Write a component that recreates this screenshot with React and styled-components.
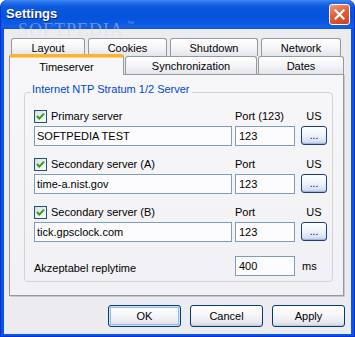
import React from "react";
import styled, { createGlobalStyle } from "styled-components";

const GlobalStyle = createGlobalStyle`
  html, body {
    margin: 0;
    padding: 0;
    background: #ffffff;
  }
  body {
    font-family: "Liberation Sans", Arial, sans-serif;
    font-size: 11px;
    color: #000;
  }
`;

const Window = styled.div`
  position: relative;
  width: 355px;
  height: 337px;
  box-sizing: border-box;
  display: flex;
  flex-direction: column;
  background: #0a55e0;
  border: 1px solid #0831d9;
  border-top: none;
  border-radius: 7px 7px 0 0;
  overflow: hidden;
`;

const TitleBar = styled.div`
  height: 29px;
  flex: none;
  display: flex;
  align-items: center;
  justify-content: space-between;
  padding: 0 4px 0 5px;
  background: linear-gradient(
    180deg,
    #3d8df7 0px,
    #2a73ea 2px,
    #0b58dc 7px,
    #0653dc 18px,
    #0a5be4 24px,
    #1560e6 27px,
    #0c4fd0 29px
  );
`;

const Title = styled.span`
  font-family: "Liberation Sans", Arial, sans-serif;
  font-weight: bold;
  font-size: 13px;
  line-height: 14px;
  margin-top: -2px;
  color: #ffffff;
  text-shadow: 1px 1px 0 #0a1e8a;
`;

const CloseButton = styled.div`
  width: 21px;
  height: 21px;
  box-sizing: border-box;
  border: 1px solid #ffffff;
  border-radius: 3px;
  background: linear-gradient(160deg, #f09a7c 0%, #e2603c 45%, #c8441f 100%);
  display: flex;
  align-items: center;
  justify-content: center;
`;

const Watermark = styled.div`
  position: absolute;
  left: 17px;
  top: 22px;
  height: 16px;
  display: flex;
  align-items: flex-start;
  font-family: "Liberation Serif", "Times New Roman", serif;
  font-size: 18px;
  line-height: 16px;
  letter-spacing: 1px;
  color: rgba(220, 220, 226, 0.45);
  pointer-events: none;
`;

const Trademark = styled.span`
  font-family: "Liberation Sans", Arial, sans-serif;
  font-size: 7px;
  line-height: 7px;
  margin-left: 3px;
  margin-top: -2px;
`;

const Client = styled.div`
  flex: 1;
  margin: 0 3px 3px 3px;
  background: #ecebef;
  padding: 9px 7px 7px 5px;
  display: flex;
  flex-direction: column;
`;

const TabRow = styled.div`
  display: flex;
  align-items: flex-end;
  height: 18px;
  gap: ${(p) => p.$gap}px;
  padding-left: ${(p) => p.$indent}px;
`;

const Tab = styled.div`
  position: relative;
  width: ${(p) => p.$w}px;
  height: ${(p) => (p.$active ? 21 : 18)}px;
  box-sizing: border-box;
  flex: none;
  display: flex;
  align-items: center;
  justify-content: center;
  border: 1px solid #919b9c;
  border-bottom: none;
  border-radius: 3px 3px 0 0;
  background: ${(p) =>
    p.$active
      ? "#f7f7f9"
      : "linear-gradient(180deg, #ffffff 0%, #f5f5f8 50%, #e4e5ec 100%)"};
  ${(p) =>
    p.$active &&
    `
    z-index: 2;
    margin-top: -3px;
    margin-bottom: -1px;
    border-top: 3px solid #f8b33a;
    box-shadow: inset 0 1px 0 #ffd36a;
    padding-top: 1px;
  `}
  font-size: 11px;
  color: #000;
`;

const Panel = styled.div`
  height: 222px;
  box-sizing: border-box;
  border: 1px solid #919b9c;
  box-shadow: 1px 1px 0 #c8c6d0;
  background: linear-gradient(180deg, #f7f7f9 0%, #f1f0f4 100%);
  padding: 8px 11px 0 14px;
`;

const Group = styled.fieldset`
  margin: 0;
  width: 308px;
  box-sizing: border-box;
  border: 1px solid #d3d2d8;
  border-radius: 4px;
  padding: 6px 4px 5px 9px;
`;

const Legend = styled.legend`
  color: #0046d5;
  font-size: 11px;
  line-height: 12px;
  padding: 0 2px 7px 1px;
  margin-left: -3px;
`;

const ServerBlock = styled.div`
  display: grid;
  grid-template-columns: 201px 66px 26px;
  grid-template-rows: 16px 20px;
  row-gap: 2px;
  margin-bottom: ${(p) => p.$after}px;
`;

const CheckLabel = styled.label`
  display: flex;
  align-items: center;
  gap: 4px;
  font-size: 11px;
`;

const Box = styled.span`
  width: 13px;
  height: 13px;
  box-sizing: border-box;
  border: 1px solid #1c5180;
  background: linear-gradient(135deg, #dcdcd7 0%, #ffffff 100%);
  display: flex;
  align-items: center;
  justify-content: center;
`;

const ColLabel = styled.span`
  display: flex;
  align-items: center;
  justify-content: ${(p) => (p.$center ? "center" : "flex-start")};
  font-size: 11px;
`;

const Field = styled.div`
  width: ${(p) => p.$w}px;
  height: 20px;
  box-sizing: border-box;
  border: 1px solid #7f9db9;
  background: #fcfcfe;
  display: flex;
  align-items: center;
  padding-left: ${(p) => p.$pad}px;
  font-size: 11px;
  white-space: nowrap;
`;

const DotsButton = styled.div`
  width: 26px;
  height: 19px;
  box-sizing: border-box;
  border: 1px solid #1c3f7a;
  border-radius: 3px;
  background: linear-gradient(180deg, #ffffff 0%, #f1f4fb 45%, #d7e0f2 85%, #b8c8e8 100%);
  box-shadow: inset 0 -1px 0 #9fb4de;
  display: flex;
  align-items: flex-end;
  justify-content: center;
  padding-bottom: 3px;
  font-size: 10px;
  line-height: 10px;
`;

const ReplyRow = styled.div`
  display: grid;
  grid-template-columns: 201px 67px 26px;
  height: 20px;
  align-items: center;
  margin-top: 14px;
`;

const ReplyLabel = styled.span`
  font-size: 11px;
  padding-top: 3px;
`;

const ButtonRow = styled.div`
  display: flex;
  justify-content: flex-end;
  gap: 9px;
  margin-top: 9px;
  margin-right: -1px;
`;

const DialogButton = styled.div`
  width: 73px;
  height: 22px;
  box-sizing: border-box;
  border: 1px solid #003c74;
  border-radius: 3px;
  background: linear-gradient(180deg, #ffffff 0%, #f7f7fa 40%, #e9eaf0 80%, #d4d6e0 100%);
  box-shadow: ${(p) =>
    p.$default
      ? "inset 0 0 0 1px #cee7ff, inset 0 0 0 2px #98b8ea"
      : "inset 0 -1px 0 #c9cbd6"};
  display: flex;
  align-items: center;
  justify-content: center;
  font-size: 11px;
`;

function Check() {
  return (
    <Box>
      <svg width="9" height="9" viewBox="0 0 9 9">
        <polyline
          points="1,4 3.3,6.6 8,1.6"
          fill="none"
          stroke="#21a121"
          strokeWidth="2"
        />
      </svg>
    </Box>
  );
}

function Server({ label, port, value, after }) {
  return (
    <ServerBlock $after={after}>
      <CheckLabel>
        <Check />
        {label}
      </CheckLabel>
      <ColLabel>{port}</ColLabel>
      <ColLabel $center>US</ColLabel>
      <Field $w={198} $pad={2}>{value}</Field>
      <Field $w={60} $pad={3}>123</Field>
      <DotsButton>...</DotsButton>
    </ServerBlock>
  );
}

export default function App() {
  return (
    <>
      <GlobalStyle />
      <Window>
        <TitleBar>
          <Title>Settings</Title>
          <CloseButton>
            <svg width="11" height="11" viewBox="0 0 11 11">
              <path
                d="M1.5 1.5 L9.5 9.5 M9.5 1.5 L1.5 9.5"
                stroke="#ffffff"
                strokeWidth="2.2"
                strokeLinecap="square"
              />
            </svg>
          </CloseButton>
        </TitleBar>
        <Client>
          <TabRow $gap={3} $indent={2}>
            <Tab $w={74}>Layout</Tab>
            <Tab $w={79}>Cookies</Tab>
            <Tab $w={88}>Shutdown</Tab>
            <Tab $w={80}>Network</Tab>
          </TabRow>
          <TabRow $gap={1} $indent={0}>
            <Tab $w={115} $active>Timeserver</Tab>
            <Tab $w={132}>Synchronization</Tab>
            <Tab $w={86}>Dates</Tab>
          </TabRow>
          <Panel>
            <Group>
              <Legend>Internet NTP Stratum 1/2 Server</Legend>
              <Server
                label="Primary server"
                port="Port (123)"
                value="SOFTPEDIA TEST"
                after={10}
              />
              <Server
                label="Secondary server (A)"
                port="Port"
                value="time-a.nist.gov"
                after={10}
              />
              <Server
                label="Secondary server (B)"
                port="Port"
                value="tick.gpsclock.com"
                after={0}
              />
              <ReplyRow>
                <ReplyLabel>Akzeptabel replytime</ReplyLabel>
                <Field $w={60} $pad={3}>400</Field>
                <span>ms</span>
              </ReplyRow>
            </Group>
          </Panel>
          <ButtonRow>
            <DialogButton $default>OK</DialogButton>
            <DialogButton>Cancel</DialogButton>
            <DialogButton>Apply</DialogButton>
          </ButtonRow>
        </Client>
        <Watermark>
          SOFTPEDIA
          <Trademark>™</Trademark>
        </Watermark>
      </Window>
    </>
  );
}
